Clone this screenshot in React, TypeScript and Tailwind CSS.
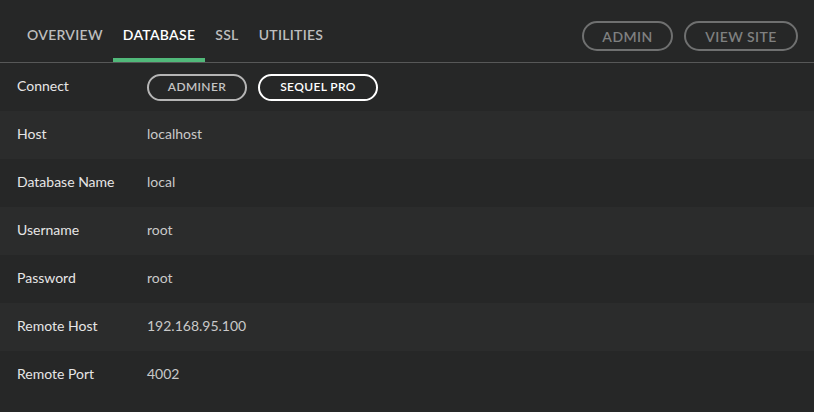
import React from 'react';

const TABS = ['Overview', 'Database', 'SSL', 'Utilities'];

const ROWS: { label: string; value: string }[] = [
  { label: 'Host', value: 'localhost' },
  { label: 'Database Name', value: 'local' },
  { label: 'Username', value: 'root' },
  { label: 'Password', value: 'root' },
  { label: 'Remote Host', value: '192.168.95.100' },
  { label: 'Remote Port', value: '4002' },
];

function Row({ label, children, odd }: { label: string; children: React.ReactNode; odd: boolean }) {
  return (
    <div className={`flex h-12 items-center px-[17px] pb-[3px] ${odd ? 'bg-[#2b2c2c]' : 'bg-[#262727]'}`}>
      <div className="w-[130px] text-[14px] text-[#e6e6e6]">{label}</div>
      <div className="flex items-center gap-[11px] text-[14px] text-[#c9c9c9]">{children}</div>
    </div>
  );
}

export default function App() {
  return (
    <div
      className="h-[412px] w-[814px] overflow-hidden bg-[#262727]"
      style={{ fontFamily: 'Lato, "Noto Sans", sans-serif' }}
    >
      <div className="flex h-[63px] items-end justify-between border-b border-[#575858] pl-[17px] pr-[16px]">
        <nav className="flex">
          {TABS.map((t) => (
            <div
              key={t}
              className={`border-b-4 px-[10px] pb-[13px] text-[14px] leading-5 font-semibold uppercase tracking-[0.02em] ${
                t === 'Database' ? 'border-[#51b97a] text-white' : 'border-transparent text-[#bdbdbd]'
              }`}
            >
              {t}
            </div>
          ))}
        </nav>
        <div className="mb-[11px] flex gap-[11px]">
          <button className="h-[30px] w-[91px] rounded-full border-2 border-[#6f7070] text-[14px] font-semibold uppercase tracking-[0.03em] text-[#7f8080]">
            Admin
          </button>
          <button className="h-[30px] w-[114px] rounded-full border-2 border-[#6f7070] text-[14px] font-semibold uppercase tracking-[0.03em] text-[#7f8080]">
            View Site
          </button>
        </div>
      </div>
      <Row label="Connect" odd={false}>
        <button className="mt-[3px] h-[27px] w-[100px] rounded-full border-2 border-[#b5b5b5] text-[12px] font-semibold uppercase tracking-[0.03em] text-[#c4c4c4]">
          Adminer
        </button>
        <button className="mt-[3px] h-[27px] w-[120px] rounded-full border-2 border-white text-[12px] font-semibold uppercase tracking-[0.03em] text-white">
          Sequel Pro
        </button>
      </Row>
      {ROWS.map((r, i) => (
        <Row key={r.label} label={r.label} odd={i % 2 === 0}>
          {r.value}
        </Row>
      ))}
    </div>
  );
}
